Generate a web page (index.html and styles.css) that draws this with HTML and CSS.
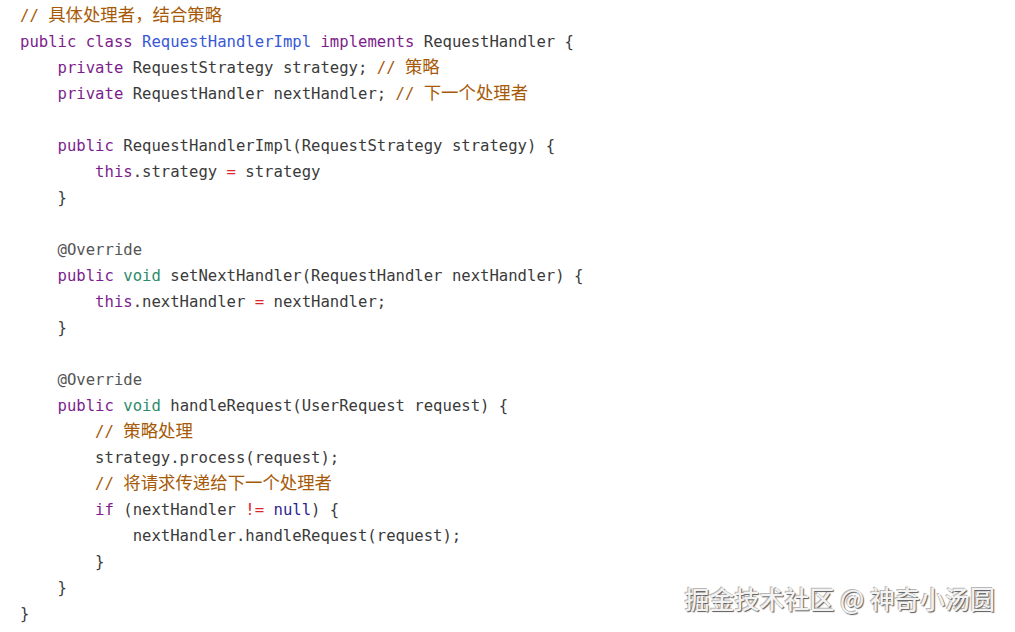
FILE: index.html
```html
<!DOCTYPE html>
<html lang="zh">
<head>
<meta charset="utf-8">
<title>RequestHandlerImpl</title>
<link rel="stylesheet" href="styles.css">
</head>
<body>
<pre class="code"><code><span class="cm">// <span class="cn">具体处理者，结合策略</span></span>
<span class="kw">public</span> <span class="kw">class</span> <span class="def">RequestHandlerImpl</span> <span class="kw">implements</span> RequestHandler {
    <span class="kw">private</span> RequestStrategy strategy; <span class="cm">// <span class="cn">策略</span></span>
    <span class="kw">private</span> RequestHandler nextHandler; <span class="cm">// <span class="cn">下一个处理者</span></span>

    <span class="kw">public</span> RequestHandlerImpl(RequestStrategy strategy) {
        <span class="kw">this</span>.strategy <span class="op">=</span> strategy
    }

    <span class="meta">@Override</span>
    <span class="kw">public</span> <span class="ty">void</span> setNextHandler(RequestHandler nextHandler) {
        <span class="kw">this</span>.nextHandler <span class="op">=</span> nextHandler;
    }

    <span class="meta">@Override</span>
    <span class="kw">public</span> <span class="ty">void</span> handleRequest(UserRequest request) {
        <span class="cm">// <span class="cn">策略处理</span></span>
        strategy.process(request);
        <span class="cm">// <span class="cn">将请求传递给下一个处理者</span></span>
        <span class="kw">if</span> (nextHandler <span class="op">!=</span> <span class="atom">null</span>) {
            nextHandler.handleRequest(request);
        }
    }
}</code></pre>
<div class="watermark">掘金技术社区 @ 神奇小汤圆</div>
</body>
</html>
```

FILE: styles.css
```css
html, body {
  margin: 0;
  padding: 0;
  background: #ffffff;
}

body {
  width: 1015px;
  height: 632px;
  position: relative;
  overflow: hidden;
}

.code {
  margin: 0;
  padding: 3px 0 0 20px;
  font-family: "DejaVu Sans Mono", "Liberation Mono", "Noto Sans CJK SC", monospace;
  font-size: 15.6px;
  line-height: 26px;
  color: #3a3a3a;
  white-space: pre;
}

.code code {
  font-family: inherit;
}

.cn {
  font-family: "Noto Sans CJK SC", sans-serif;
  font-size: 17.4px;
  line-height: 1;
}

.cm { color: #a65a08; }
.kw { color: #7d1d8c; }
.def { color: #3858d6; }
.ty { color: #2a8a6a; }
.atom { color: #2e2592; }
.op { color: #e0242c; }
.meta { color: #555555; }

.watermark {
  position: absolute;
  right: 20px;
  top: 582px;
  font-family: "Noto Sans CJK SC", sans-serif;
  font-size: 25px;
  font-weight: 500;
  line-height: 32px;
  color: #f2f2f2;
  text-shadow: 1px 1px 1px #5a5a5a, -1px -1px 0 #b8b8b8;
}
```
